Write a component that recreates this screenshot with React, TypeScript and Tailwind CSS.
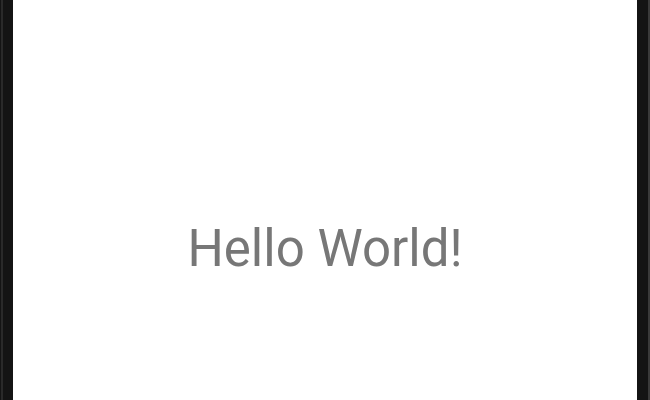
export default function App() {
  return (
    <div className="flex h-[400px] w-[650px] bg-[#111111]">
      <div className="flex w-[13px] shrink-0 bg-[#141414]">
        <div className="ml-[1px] w-[2px] bg-[#2a2a2a]" />
      </div>
      <main className="flex flex-1 items-center justify-center bg-white pt-[96px]">
        <span className="font-['Roboto',sans-serif] text-[51px] leading-none text-[#777777]">Hello World!</span>
      </main>
      <div className="flex w-[13px] shrink-0">
        <div className="flex-1 bg-[#141414]" />
        <div className="w-[2px] bg-[#3a3a3a]" />
      </div>
    </div>
  );
}
